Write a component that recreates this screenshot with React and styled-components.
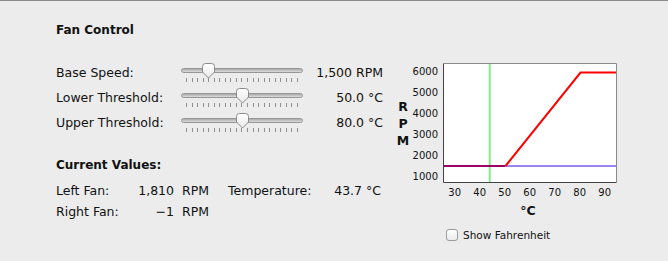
import React from 'react';
import styled, { createGlobalStyle } from 'styled-components';

const GlobalStyle = createGlobalStyle`
  html, body {
    margin: 0;
    padding: 0;
    background: #ececec;
  }
  body {
    font-family: "DejaVu Sans", "Lucida Grande", sans-serif;
    color: #111;
  }
`;

// slider settings: tick index where the knob sits
const sliders = [
  { label: 'Base Speed:', value: '1,500 RPM', tick: 4 },
  { label: 'Lower Threshold:', value: '50.0 °C', tick: 10 },
  { label: 'Upper Threshold:', value: '80.0 °C', tick: 10 },
];

const TICKS = 21;

// chart mapping: temperature 25..94.6 over 174px, rpm 1 px = 1000/21
const PLOT_X = 33;
const PLOT_Y = 5;
const PLOT_W = 174;
const PLOT_H = 120;
const tx = (t) => PLOT_X + (t - 25) * 2.5;
const ry = (r) => PLOT_Y + 8.5 + (6000 - r) * 0.021;

const Chart = () => {
  const yTicks = [6000, 5000, 4000, 3000, 2000, 1000];
  const xTicks = [30, 40, 50, 60, 70, 80, 90];
  const right = PLOT_X + PLOT_W;
  const base = ry(1500);
  return (
    <svg width="212" height="140" viewBox="0 0 212 140">
      <rect x={PLOT_X} y={PLOT_Y} width={PLOT_W} height={PLOT_H} fill="#fff" />
      <line x1={tx(43.7)} y1={PLOT_Y} x2={tx(43.7)} y2={PLOT_Y + PLOT_H} stroke="#86ee86" strokeWidth="2" />
      <line x1={PLOT_X} y1={base} x2={tx(50)} y2={base} stroke="#9c0066" strokeWidth="2" />
      <line x1={tx(50)} y1={base} x2={right} y2={base} stroke="#9d82f4" strokeWidth="2" />
      <polyline
        points={`${tx(50)},${base} ${tx(80)},${ry(6000) + 1} ${right},${ry(6000) + 1}`}
        fill="none"
        stroke="#ff0000"
        strokeWidth="2"
      />
      <path d={`M${PLOT_X + 0.5},${PLOT_Y} V${PLOT_Y + PLOT_H - 0.5} H${right}`} fill="none" stroke="#444" strokeWidth="1" />
      <path d={`M${PLOT_X},${PLOT_Y + 0.5} H${right - 0.5} V${PLOT_Y + PLOT_H}`} fill="none" stroke="#8a8a8a" strokeWidth="1" />
      {yTicks.map((r, i) => (
        <text key={r} x="28" y={13 + i * 21 + 3.6} textAnchor="end" fontSize="10" fontFamily="DejaVu Sans, sans-serif" fill="#111">
          {r}
        </text>
      ))}
      {xTicks.map((t) => (
        <text key={t} x={tx(t) - 0.8} y="138" textAnchor="middle" fontSize="10" fontFamily="DejaVu Sans, sans-serif" fill="#111">
          {t}
        </text>
      ))}
    </svg>
  );
};

const Thumb = () => (
  <svg width="13" height="16" viewBox="0 0 13 16">
    <defs>
      <linearGradient id="knob" x1="0" y1="0" x2="0" y2="1">
        <stop offset="0" stopColor="#ffffff" />
        <stop offset="1" stopColor="#e9e9e9" />
      </linearGradient>
    </defs>
    <path
      d="M0.5,3.5 Q0.5,0.5 3.5,0.5 H9.5 Q12.5,0.5 12.5,3.5 V9 L6.5,15 L0.5,9 Z"
      fill="url(#knob)"
      stroke="#8a8a8a"
      strokeWidth="1"
    />
  </svg>
);

const App = () => {
  return (
    <>
      <GlobalStyle />
      <Window>
        <Content>
          <LeftColumn>
            <SectionTitle>Fan Control</SectionTitle>
            <SliderList>
              {sliders.map((s) => (
                <SliderRow key={s.label}>
                  <RowLabel>{s.label}</RowLabel>
                  <Slider>
                    <Track />
                    <Knob style={{ left: `${5.5 + (s.tick * 111.7) / (TICKS - 1) - 6.5}px` }}>
                      <Thumb />
                    </Knob>
                    <TickRow>
                      {Array.from({ length: TICKS }).map((_, i) => (
                        <Tick key={i} />
                      ))}
                    </TickRow>
                  </Slider>
                  <RowValue>{s.value}</RowValue>
                </SliderRow>
              ))}
            </SliderList>

            <SectionTitle $spaced>Current Values:</SectionTitle>
            <ReadingGrid>
              <span>Left Fan:</span>
              <Num>1,810</Num>
              <Unit>RPM</Unit>
              <span>Temperature:</span>
              <Num>43.7 °C</Num>

              <span>Right Fan:</span>
              <Num>−1</Num>
              <Unit>RPM</Unit>
              <span />
              <span />
            </ReadingGrid>
          </LeftColumn>

          <ChartPanel>
            <ChartRow>
              <RpmAxis>
                <span>R</span>
                <span>P</span>
                <span>M</span>
              </RpmAxis>
              <Chart />
            </ChartRow>
            <XTitle>°C</XTitle>
            <CheckRow>
              <CheckBox />
              <span>Show Fahrenheit</span>
            </CheckRow>
          </ChartPanel>
        </Content>
      </Window>
    </>
  );
};

export default App;

const Window = styled.div`
  width: 668px;
  height: 261px;
  box-sizing: border-box;
  background: #ececec;
  border-top: 1px solid #8a8a8a;
  overflow: hidden;
`;

const Content = styled.div`
  display: flex;
  padding: 21px 0 0 56px;
`;

const LeftColumn = styled.div`
  width: 327px;
  flex: 0 0 327px;
`;

const SectionTitle = styled.div`
  font-size: 12px;
  font-weight: bold;
  line-height: 16px;
  margin-top: ${(p) => (p.$spaced ? '22px' : '0')};
`;

const SliderList = styled.div`
  margin-top: 22px;
  display: flex;
  flex-direction: column;
`;

const SliderRow = styled.div`
  display: grid;
  grid-template-columns: 125px 122px 80px;
  height: 25px;
  font-size: 12.5px;
`;

const RowLabel = styled.div`
  line-height: 25px;
  white-space: nowrap;
`;

const RowValue = styled.div`
  line-height: 25px;
  text-align: right;
  white-space: nowrap;
`;

const Slider = styled.div`
  position: relative;
  height: 25px;
`;

const Track = styled.div`
  position: absolute;
  top: 8px;
  left: 0;
  right: 0;
  height: 3px;
  border: 1px solid #979797;
  border-radius: 3px;
  background: linear-gradient(#a9a9a9, #dcdcdc);
`;

const Knob = styled.div`
  position: absolute;
  top: 3px;
  width: 13px;
  height: 16px;
  line-height: 0;
`;

const TickRow = styled.div`
  position: absolute;
  top: 18px;
  left: 5px;
  right: 5px;
  display: flex;
  justify-content: space-between;
`;

const Tick = styled.div`
  width: 1px;
  height: 4px;
  background: #8f8f8f;
`;

const ReadingGrid = styled.div`
  margin-top: 7px;
  display: grid;
  grid-template-columns: 80px 38px 54px 105px 48px;
  grid-auto-rows: 21px;
  line-height: 21px;
  font-size: 12.5px;
  white-space: nowrap;
`;

const Num = styled.span`
  text-align: right;
  white-space: nowrap;
`;

const Unit = styled.span`
  padding-left: 8px;
`;

const ChartPanel = styled.div`
  margin-left: 13px;
  margin-top: 36px;
  display: flex;
  flex-direction: column;
`;

const ChartRow = styled.div`
  display: flex;
  align-items: flex-start;
`;

const RpmAxis = styled.div`
  width: 14px;
  height: 120px;
  margin-top: 5px;
  display: flex;
  flex-direction: column;
  justify-content: center;
  align-items: center;
  font-size: 12.5px;
  font-weight: bold;
  line-height: 17px;
`;

const XTitle = styled.div`
  margin-left: 47px;
  width: 170px;
  margin-top: 5px;
  text-align: center;
  font-size: 12.5px;
  font-weight: bold;
  line-height: 16px;
`;

const CheckRow = styled.div`
  margin-top: 8px;
  padding-left: 50px;
  display: flex;
  align-items: center;
  gap: 5px;
  font-size: 10.5px;
  line-height: 16px;
`;

const CheckBox = styled.div`
  width: 10px;
  height: 10px;
  border: 1px solid #9b9b9b;
  border-radius: 3px;
  background: linear-gradient(#ffffff, #ececec);
`;
